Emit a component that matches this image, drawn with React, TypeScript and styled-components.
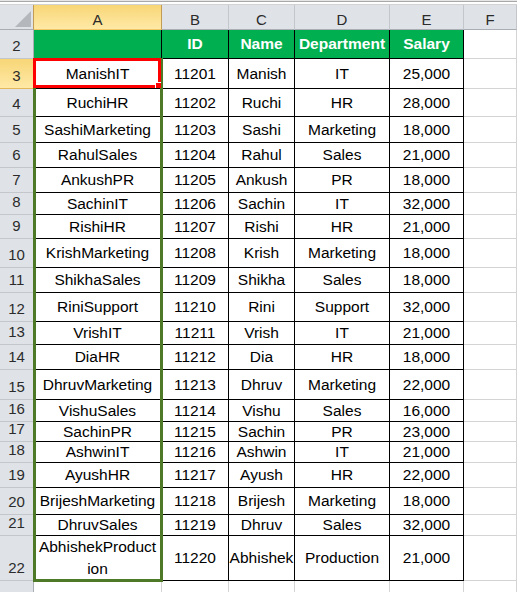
import styled, { createGlobalStyle, css } from 'styled-components'

const COLUMNS = ['A', 'B', 'C', 'D', 'E', 'F']
const HEADINGS = ['', 'ID', 'Name', 'Department', 'Salary']

// key, id, name, department, salary, row height
const EMPLOYEES: [string, number, string, string, string, number][] = [
  ['ManishIT', 11201, 'Manish', 'IT', '25,000', 30],
  ['RuchiHR', 11202, 'Ruchi', 'HR', '28,000', 28],
  ['SashiMarketing', 11203, 'Sashi', 'Marketing', '18,000', 26],
  ['RahulSales', 11204, 'Rahul', 'Sales', '21,000', 25],
  ['AnkushPR', 11205, 'Ankush', 'PR', '18,000', 25],
  ['SachinIT', 11206, 'Sachin', 'IT', '32,000', 22],
  ['RishiHR', 11207, 'Rishi', 'HR', '21,000', 24],
  ['KrishMarketing', 11208, 'Krish', 'Marketing', '18,000', 29],
  ['ShikhaSales', 11209, 'Shikha', 'Sales', '18,000', 25],
  ['RiniSupport', 11210, 'Rini', 'Support', '32,000', 29],
  ['VrishIT', 11211, 'Vrish', 'IT', '21,000', 23],
  ['DiaHR', 11212, 'Dia', 'HR', '18,000', 25],
  ['DhruvMarketing', 11213, 'Dhruv', 'Marketing', '22,000', 30],
  ['VishuSales', 11214, 'Vishu', 'Sales', '16,000', 22],
  ['SachinPR', 11215, 'Sachin', 'PR', '23,000', 20],
  ['AshwinIT', 11216, 'Ashwin', 'IT', '21,000', 21],
  ['AyushHR', 11217, 'Ayush', 'HR', '22,000', 25],
  ['BrijeshMarketing', 11218, 'Brijesh', 'Marketing', '18,000', 27],
  ['DhruvSales', 11219, 'Dhruv', 'Sales', '32,000', 21],
  ['AbhishekProduct\nion', 11220, 'Abhishek', 'Production', '21,000', 45],
]

const ROW_TRACKS = ['25px', '29px', ...EMPLOYEES.map((e) => `${e[5]}px`), '20px'].join(' ')

const GlobalStyle = createGlobalStyle`
  html, body {
    margin: 0;
    background: #fff;
    overflow: hidden;
  }
  body {
    font-family: 'Liberation Sans', Arial, sans-serif;
  }
`

const Sheet = styled.div`
  width: 517px;
  height: 592px;
  overflow: hidden;
  background: #fff;
`

const TopStrip = styled.div`
  height: 5px;
  background: linear-gradient(#e6e6e6 0 1px, #a8a8a8 1px 2px, #fff 2px 4px, #d2d2d2 4px 5px);
`

const Grid = styled.div`
  position: relative;
  display: grid;
  grid-template-columns: 34px 128px 67px 66px 95px 74px 53px;
  grid-template-rows: ${ROW_TRACKS};
`

const Corner = styled.div`
  display: flex;
  align-items: flex-end;
  justify-content: flex-end;
  padding: 0 2px 2px 0;
  background: #dfe3e8;
  border-right: 1px solid #c29b55;
  border-bottom: 1px solid #a9aeb4;
`

const CornerMark = styled.span`
  width: 0;
  height: 0;
  border-left: 16px solid transparent;
  border-bottom: 16px solid #b4b8bd;
`

const ColHeader = styled.div<{ $active?: boolean }>`
  display: flex;
  align-items: flex-end;
  justify-content: center;
  font-size: 15px;
  line-height: 18px;
  color: #2b2b2b;
  background: #dfe3e8;
  border-right: 1px solid #c3c7cc;
  border-bottom: 1px solid #a9aeb4;
  ${({ $active }) =>
    $active &&
    css`
      background: linear-gradient(#f8d677, #ffe9a6);
      border-right-color: #c29b55;
      border-bottom-color: #f2c464;
    `}
`

const RowHeader = styled.div<{ $active?: boolean }>`
  display: flex;
  align-items: flex-end;
  justify-content: center;
  padding-bottom: 2px;
  font-size: 15px;
  line-height: 20px;
  color: #2b2b2b;
  background: #dfe3e8;
  border-right: 1px solid #a9aeb4;
  border-bottom: 1px solid #c3c7cc;
  ${({ $active }) =>
    $active &&
    css`
      background: linear-gradient(#f8d677, #ffe9a6);
      border-bottom-color: #e2b85a;
    `}
`

const Cell = styled.div<{ $kind: 'head' | 'data' | 'blank' }>`
  display: flex;
  align-items: center;
  justify-content: center;
  text-align: center;
  white-space: pre;
  font-size: 15.5px;
  line-height: 22px;
  color: #000;
  border-right: 1px solid #d4d4d4;
  border-bottom: 1px solid #d4d4d4;
  ${({ $kind }) => $kind === 'data' && css`
    border-color: #000;
  `}
  ${({ $kind }) => $kind === 'head' && css`
    border-color: #000;
    background: #00b050;
    color: #fff;
    font-weight: bold;
  `}
`

const RangeOutline = styled.div`
  position: absolute;
  left: 33px;
  top: 53px;
  width: 130px;
  height: 524px;
  border: 3px solid #4e7a27;
  box-sizing: border-box;
  pointer-events: none;
`

const ActiveOutline = styled.div`
  position: absolute;
  left: 33px;
  top: 53px;
  width: 128px;
  height: 30px;
  border: 3px solid #ff0000;
  box-sizing: border-box;
  pointer-events: none;
`

const FillHandle = styled.span`
  position: absolute;
  right: -3px;
  bottom: -3px;
  width: 5px;
  height: 5px;
  background: #ff0000;
  border-top: 1px solid #fff;
  border-left: 1px solid #fff;
`

export default function App() {
  return (
    <Sheet>
      <GlobalStyle />
      <TopStrip />
      <Grid>
        <Corner>
          <CornerMark />
        </Corner>
        {COLUMNS.map((c) => (
          <ColHeader key={c} $active={c === 'A'}>{c}</ColHeader>
        ))}

        <RowHeader>2</RowHeader>
        {HEADINGS.map((h, i) => (
          <Cell key={i} $kind="head">{h}</Cell>
        ))}
        <Cell $kind="blank" />

        {EMPLOYEES.map(([key, id, name, dept, salary], i) => (
          <Row key={id} num={i + 3} values={[key, String(id), name, dept, salary]} />
        ))}

        <RowHeader />
        {COLUMNS.map((c) => (
          <Cell key={c} $kind="blank" />
        ))}

        <RangeOutline />
        <ActiveOutline>
          <FillHandle />
        </ActiveOutline>
      </Grid>
    </Sheet>
  )
}

function Row({ num, values }: { num: number; values: string[] }) {
  return (
    <>
      <RowHeader $active={num === 3}>{num}</RowHeader>
      {values.map((v, i) => (
        <Cell key={i} $kind="data">{v}</Cell>
      ))}
      <Cell $kind="blank" />
    </>
  )
}
